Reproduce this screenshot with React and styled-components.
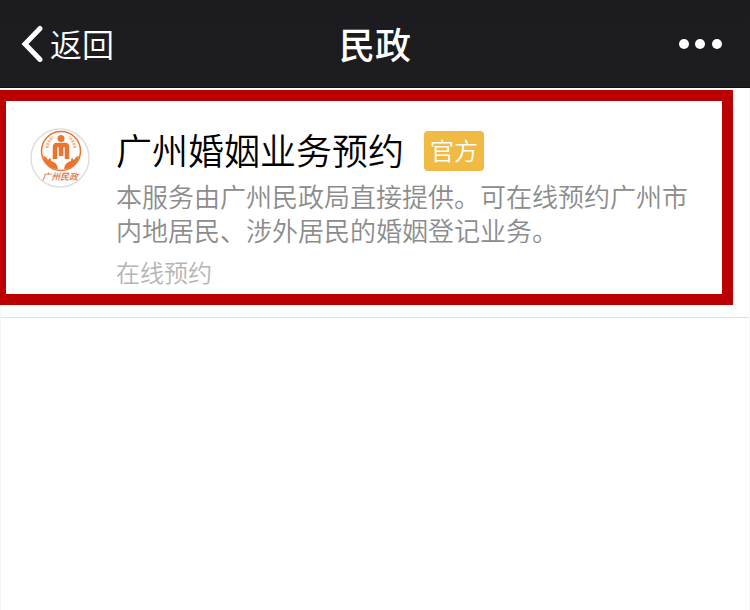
import React from 'react';
import styled, { createGlobalStyle } from 'styled-components';

const GlobalStyle = createGlobalStyle`
  * {
    box-sizing: border-box;
  }

  body {
    margin: 0;
    overflow-x: hidden;
    background: #fefefe;
    font-family: 'Noto Sans CJK SC', sans-serif;
  }
`;

const Page = styled.div`
  min-height: 100vh;
  border: solid #f6f6f7;
  border-width: 0 1px;
`;

const NavBar = styled.header`
  display: grid;
  grid-template-columns: 1fr auto 1fr;
  align-items: center;
  height: 88px;
  margin: 0 -1px;
  padding: 0 20px 2px;
  color: #fff;
  background: linear-gradient(#1c1b20, #1d1d1f);
  border-bottom: 1px solid #111;
`;

const NavButton = styled.button`
  display: flex;
  align-items: center;
  gap: 6px;
  justify-self: ${({ $end }) => ($end ? 'end' : 'start')};
  padding: ${({ $end }) => ($end ? '2px 8px 0 0' : '0')};
  border: 0;
  color: inherit;
  background: none;
  font-family: inherit;
  font-size: 32px;
  font-weight: 350;
  line-height: 44px;
  cursor: pointer;
`;

const NavTitle = styled.h1`
  margin: 0;
  font-size: 36px;
  font-weight: 500;
  line-height: 44px;
`;

const Service = styled.article`
  position: relative;
  display: flex;
  gap: 26px;
  padding: 40px 40px 28px 29px;
  background: #fff;
  border-bottom: 1px solid #e0e0e0;
`;

const Highlight = styled.div`
  position: absolute;
  inset: 2px 16px 12px -6px;
  border: 11px solid #ba0000;
  pointer-events: none;
`;

const Logo = styled.svg`
  flex: none;
  width: 60px;
  height: 60px;
`;

const Details = styled.div`
  flex: 1;
  min-width: 0;
`;

const Heading = styled.div`
  display: flex;
  align-items: center;
  gap: 20px;
  margin-top: 3px;
`;

const ServiceName = styled.h2`
  margin: 0;
  padding-bottom: 4px;
  color: #000;
  font-size: 36px;
  font-weight: 350;
  line-height: 36px;
`;

const Badge = styled.span`
  padding: 0 6px 2px;
  border-radius: 4px;
  color: #fff;
  background: #f0ba45;
  font-size: 24px;
  font-weight: 350;
  line-height: 38px;
`;

const Description = styled.p`
  margin: 8px 0 0;
  color: #8c8c8c;
  font-size: 26px;
  font-weight: 350;
  line-height: 34px;
`;

const Tag = styled.p`
  margin: 8px 0 0;
  color: #b5b5b5;
  font-size: 24px;
  font-weight: 350;
  line-height: 34px;
`;

function BackIcon() {
  return (
    <svg width="24" height="38" viewBox="0 0 24 38" fill="none" aria-hidden="true">
      <path d="M20 4.500 5 20 20 35.500" stroke="#fff" strokeWidth="5" strokeLinecap="round" />
    </svg>
  );
}

function MoreIcon() {
  return (
    <svg width="44" height="12" viewBox="0 0 44 12" fill="#fff" aria-hidden="true">
      <circle cx="6" cy="6" r="5" />
      <circle cx="22" cy="6" r="5" />
      <circle cx="39" cy="6" r="5" />
    </svg>
  );
}

function CivilAffairsLogo() {
  return (
    <Logo viewBox="0 0 60 60" role="img" aria-label="广州民政">
      <circle cx="30" cy="30" r="29" fill="#fff" stroke="#dedede" strokeWidth="1.5" />
      <g fill="none" stroke="#e9752f">
        <circle cx="31" cy="23" r="19.5" strokeWidth="1.500" />
        <path d="M17 20q1-7 6-11M45 20q-1-7-6-11" strokeWidth="3" strokeDasharray="2 1" opacity=".55" />
        <path d="M25 31V19q0-2 2-2h8q2 0 2 2v12M31 17v11" strokeWidth="4.500" />
      </g>
      <g fill="#e9752f">
        <circle cx="31" cy="10.500" r="3.500" />
        <path d="M13 28q3 0 5 4l2-2q1 0 1 3 6 1 7 8-6 0-10-4t-5-9ZM49 28q-3 0-5 4l-2-2q-1 0-1 3-6 1-7 8 6 0 10-4t5-9Z" />
      </g>
      <text
        x="30"
        y="52"
        textAnchor="middle"
        fill="#dd7040"
        fontFamily="'Noto Sans CJK SC', sans-serif"
        fontSize="9"
        fontWeight="500"
        fontStyle="italic"
      >
        广州民政
      </text>
    </Logo>
  );
}

export default function App() {
  return (
    <>
      <GlobalStyle />
      <Page>
        <NavBar>
          <NavButton type="button">
            <BackIcon />
            返回
          </NavButton>
          <NavTitle>民政</NavTitle>
          <NavButton type="button" $end aria-label="更多">
            <MoreIcon />
          </NavButton>
        </NavBar>
        <main>
          <Service>
            <CivilAffairsLogo />
            <Details>
              <Heading>
                <ServiceName>广州婚姻业务预约</ServiceName>
                <Badge>官方</Badge>
              </Heading>
              <Description>
                本服务由广州民政局直接提供。可在线预约广州市内地居民、涉外居民的婚姻登记业务。
              </Description>
              <Tag>在线预约</Tag>
            </Details>
            <Highlight />
          </Service>
        </main>
      </Page>
    </>
  );
}
